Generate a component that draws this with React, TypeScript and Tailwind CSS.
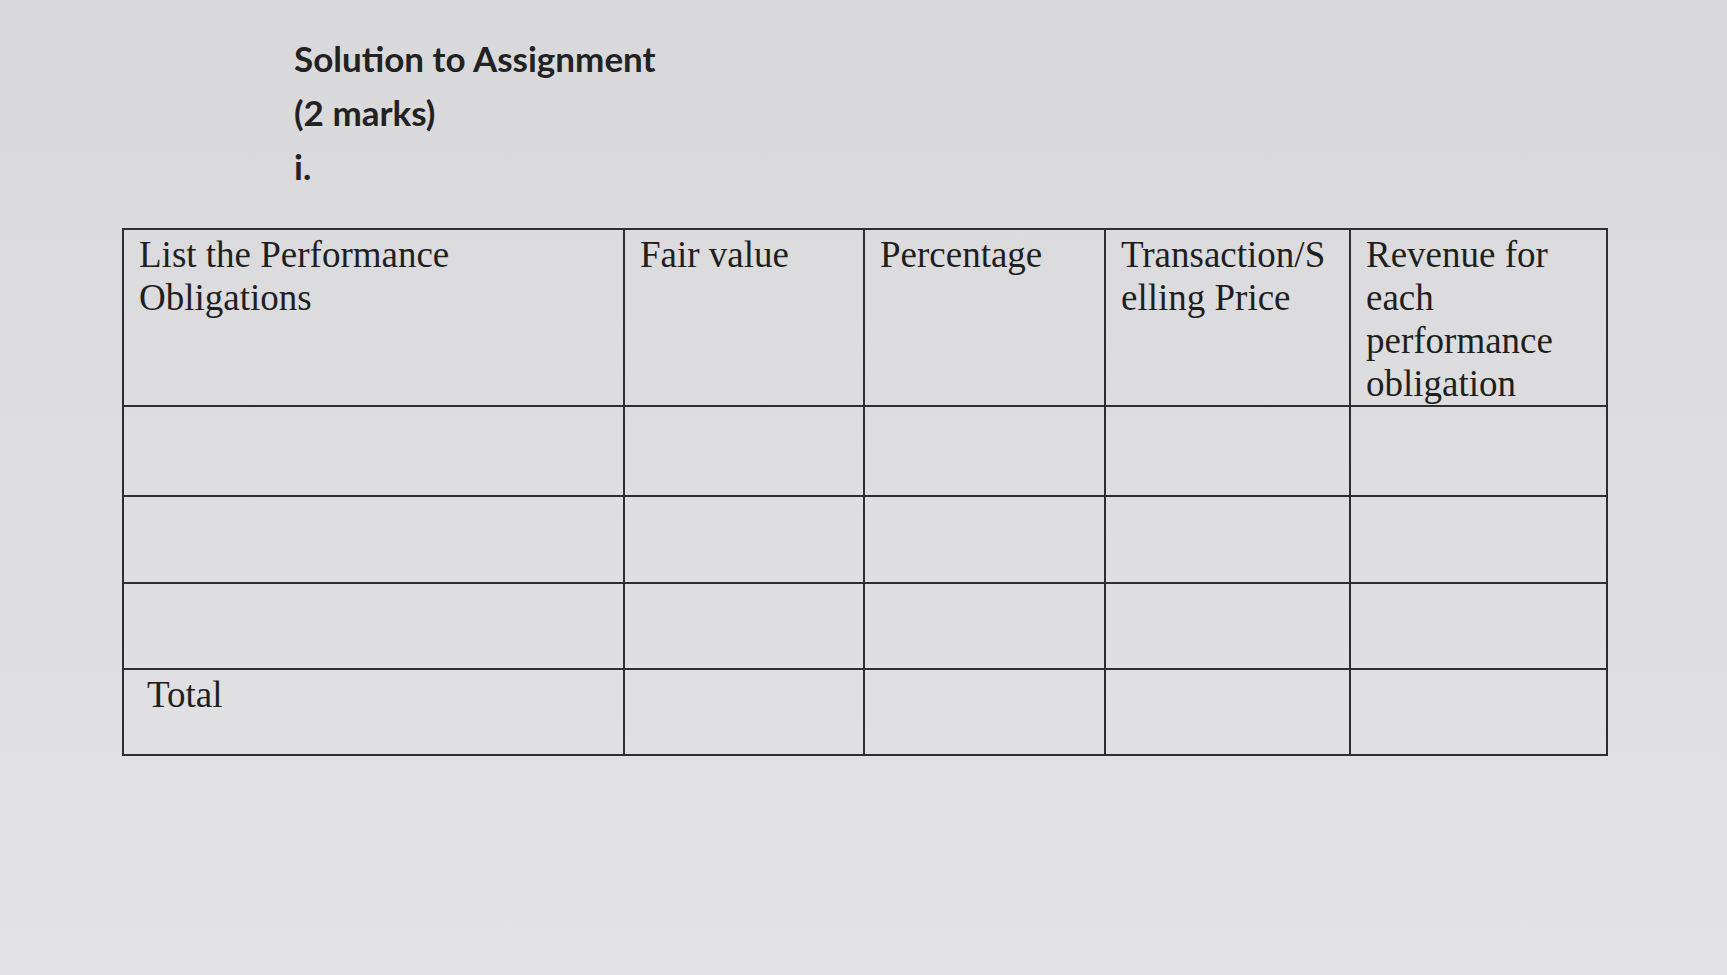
import React from "react";

const cols = ["w-[501px]", "w-[240px]", "w-[241px]", "w-[245px]", "w-[257px]"];

const cell =
  "border-2 border-[#2e2e2e] align-top px-[15px] pt-[3px] text-left font-normal";

export default function App() {
  return (
    <div className="min-h-screen w-full bg-gradient-to-b from-[#d9d9db] to-[#e3e3e5] text-[#1f1f1f]">
      <div className="pt-[31px] pl-[294px] font-['Lato','Open_Sans',sans-serif] font-bold text-[35px] leading-[54px] text-[#222]">
        <p>Solution to Assignment</p>
        <p>(2 marks)</p>
        <p>i.</p>
      </div>

      <div className="pl-[122px] pt-[35px]">
        <table className="border-collapse table-fixed font-['Liberation_Serif','Times_New_Roman',serif] text-[37px] leading-[43px]">
          <colgroup>
            {cols.map((c, i) => (
              <col key={i} className={c} />
            ))}
          </colgroup>
          <thead>
            <tr className="h-[172px]">
              <th className={cell}>
                List the Performance
                <br />
                Obligations
              </th>
              <th className={cell}>Fair value</th>
              <th className={cell}>Percentage</th>
              <th className={cell}>
                Transaction/S
                <br />
                elling Price
              </th>
              <th className={cell}>
                Revenue for
                <br />
                each
                <br />
                performance
                <br />
                obligation
              </th>
            </tr>
          </thead>
          <tbody>
            <tr className="h-[90px]">
              {cols.map((_, i) => (
                <td key={i} className={cell}></td>
              ))}
            </tr>
            <tr className="h-[87px]">
              {cols.map((_, i) => (
                <td key={i} className={cell}></td>
              ))}
            </tr>
            <tr className="h-[86px]">
              {cols.map((_, i) => (
                <td key={i} className={cell}></td>
              ))}
            </tr>
            <tr className="h-[86px]">
              <td className={cell}>
                <span className="pl-[8px]">Total</span>
              </td>
              <td className={cell}></td>
              <td className={cell}></td>
              <td className={cell}></td>
              <td className={cell}></td>
            </tr>
          </tbody>
        </table>
      </div>
    </div>
  );
}
